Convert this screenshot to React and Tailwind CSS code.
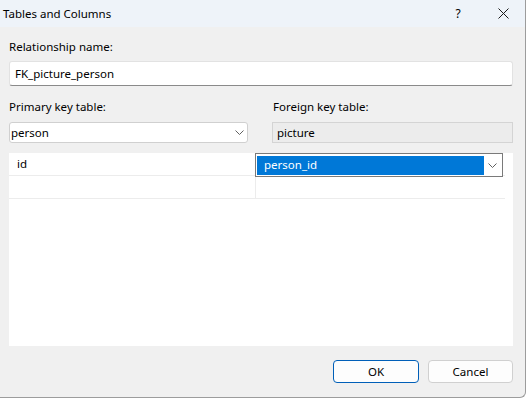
import React from "react";

const font = { fontFamily: '"Segoe UI", "Noto Sans", "Liberation Sans", sans-serif' };

function Chevron({ color = "#606060" }) {
  return (
    <svg width="9" height="5" viewBox="0 0 9 5" className="shrink-0">
      <path d="M0.5 0.5 L4.5 4.5 L8.5 0.5" fill="none" stroke={color} strokeWidth="1" />
    </svg>
  );
}

function App() {
  return (
    <div className="h-[399px] w-[529px] bg-white text-[11.5px] text-black" style={font}>
      <div className="flex h-[398px] w-[526px] flex-col rounded-br-[6px] border-b border-r border-[#9c9c9c] bg-[#f0f0f0]">
        <div className="flex h-[27px] shrink-0 items-center bg-[#eef3f9] pl-[3px]">
          <span className="flex-1 leading-none">Tables and Columns</span>
          <span className="w-[12px] text-center text-[12px] leading-none">?</span>
          <div className="ml-[33px] mr-[16px] flex h-[27px] w-[12px] items-center justify-center">
            <svg width="11" height="11" viewBox="0 0 11 11">
              <path d="M0.5 0.5 L10.5 10.5 M10.5 0.5 L0.5 10.5" stroke="#1a1a1a" strokeWidth="1" />
            </svg>
          </div>
        </div>

        <div className="flex flex-1 flex-col pl-[9px] pr-[12px]">
          <div className="mt-[12px] h-[16px] leading-[16px]">Relationship name:</div>
          <div className="mt-[6px] flex h-[25px] items-center rounded-[3px] border border-b-[#8a8a8a] border-[#e2e2e2] bg-white pl-[5px]">
            FK_picture_person
          </div>

          <div className="mt-[13px] grid grid-cols-[239px_1fr] gap-x-[24px]">
            <div className="h-[16px] leading-[16px]">Primary key table:</div>
            <div className="h-[16px] pl-[1px] leading-[16px]">Foreign key table:</div>
            <div className="mt-[7px] flex h-[21px] items-center justify-between rounded-[3px] border border-[#d0d0d0] bg-white pl-[1px] pr-[3px]">
              <span>person</span>
              <Chevron />
            </div>
            <div className="mt-[7px] flex h-[21px] items-center border border-[#d4d4d4] bg-[#ececec] pl-[4px]">
              picture
            </div>
          </div>

          <div className="mt-[10px] h-[193px] bg-white">
            <div className="grid grid-cols-[247px_249px]">
              <div className="flex h-[23px] items-center border-b border-r border-[#ececec] pl-[8px]">id</div>
              <div className="relative h-[23px] border-b border-[#ececec]">
                <div className="absolute left-[-1px] top-0 flex h-[24px] w-[248px] items-center border border-[#7a7a7a] bg-white pl-[1px] pr-[5px]">
                  <div className="flex h-[19px] w-[227px] items-center bg-[#0078d7] pl-[7px] text-white">person_id</div>
                  <div className="flex flex-1 justify-end">
                    <Chevron />
                  </div>
                </div>
              </div>
              <div className="h-[23px] border-b border-r border-[#ececec]"></div>
              <div className="h-[23px] border-b border-[#ececec]"></div>
            </div>
          </div>

          <div className="mt-[14px] flex justify-end gap-[9px]">
            <button className="flex h-[23px] w-[86px] items-center justify-center rounded-[4px] border border-[#005fb8] bg-[#fdfdfd]">
              OK
            </button>
            <button className="flex h-[23px] w-[85px] items-center justify-center rounded-[4px] border border-[#d0d0d0] bg-[#fdfdfd]">
              Cancel
            </button>
          </div>
        </div>
      </div>
    </div>
  );
}

export default App;
